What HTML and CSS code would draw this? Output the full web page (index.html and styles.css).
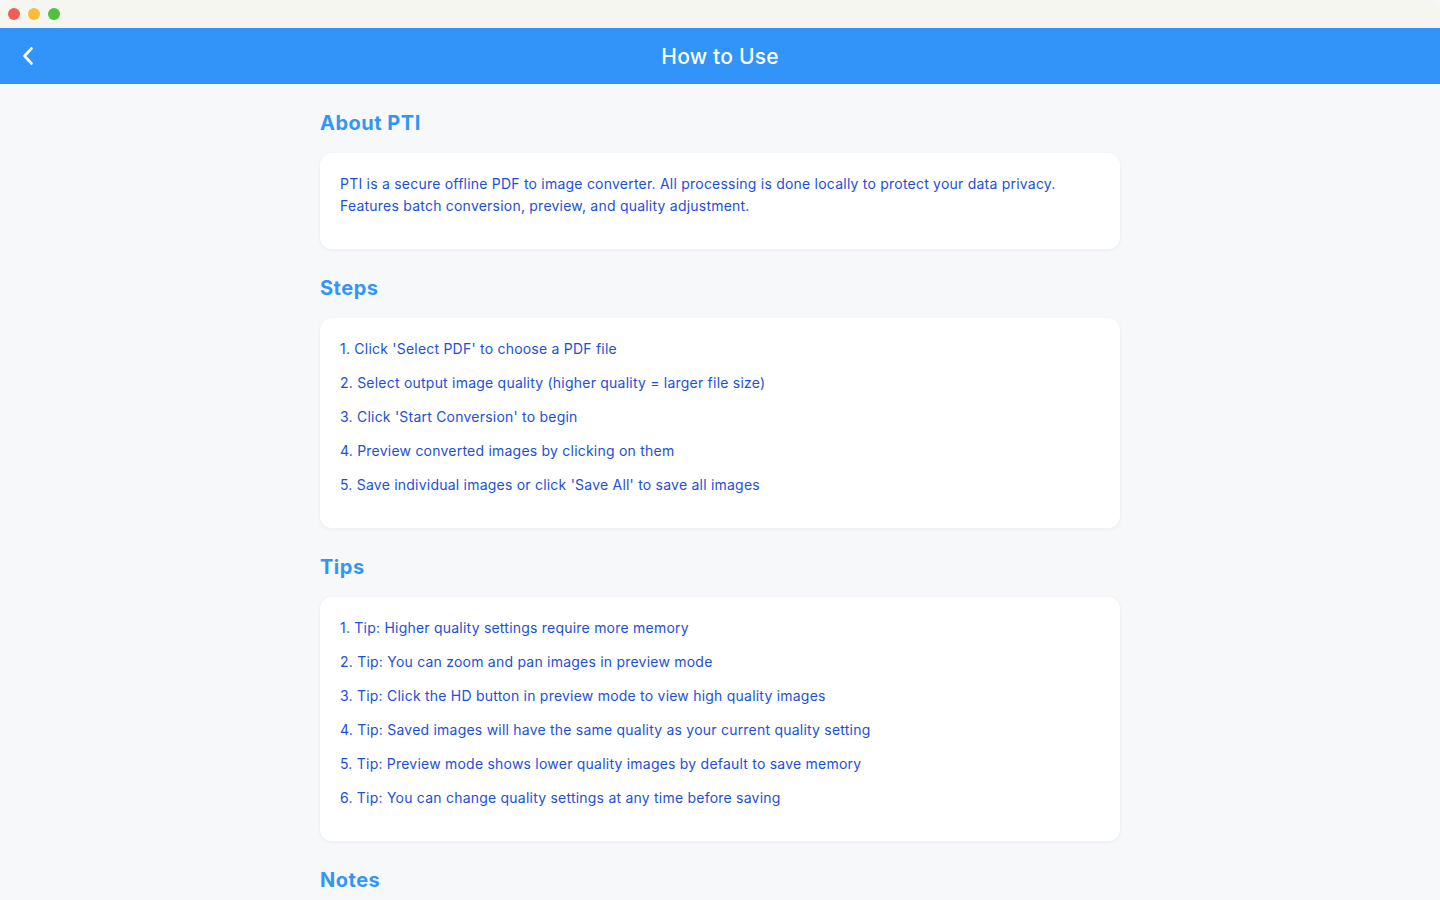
FILE: index.html
```html
<!DOCTYPE html>
<html>
<head>
<meta charset="utf-8">
<link rel="stylesheet" href="styles.css">
</head>
<body>
<div class="window">
  <div class="titlebar">
    <span class="light red"></span>
    <span class="light yellow"></span>
    <span class="light green"></span>
  </div>
  <header class="appbar">
    <button class="back" aria-label="Back">
      <svg width="14" height="20" viewBox="0 0 14 20"><path d="M10.5 2.5 L3.5 10 L10.5 17.5" fill="none" stroke="#fff" stroke-width="2.6" stroke-linecap="round" stroke-linejoin="round"/></svg>
    </button>
    <h1 class="title">How to Use</h1>
  </header>
  <main class="content">
    <div class="container">
      <h2 class="section-title">About PTI</h2>
      <div class="card">
        <p class="item">PTI is a secure offline PDF to image converter. All processing is done locally to protect your data privacy.<br>Features batch conversion, preview, and quality adjustment.</p>
      </div>

      <h2 class="section-title">Steps</h2>
      <div class="card">
        <p class="item">1. Click 'Select PDF' to choose a PDF file</p>
        <p class="item">2. Select output image quality (higher quality = larger file size)</p>
        <p class="item">3. Click 'Start Conversion' to begin</p>
        <p class="item">4. Preview converted images by clicking on them</p>
        <p class="item">5. Save individual images or click 'Save All' to save all images</p>
      </div>

      <h2 class="section-title">Tips</h2>
      <div class="card">
        <p class="item">1. Tip: Higher quality settings require more memory</p>
        <p class="item">2. Tip: You can zoom and pan images in preview mode</p>
        <p class="item">3. Tip: Click the HD button in preview mode to view high quality images</p>
        <p class="item">4. Tip: Saved images will have the same quality as your current quality setting</p>
        <p class="item">5. Tip: Preview mode shows lower quality images by default to save memory</p>
        <p class="item">6. Tip: You can change quality settings at any time before saving</p>
      </div>

      <h2 class="section-title">Notes</h2>
    </div>
  </main>
</div>
</body>
</html>
```
FILE: styles.css
```css
* { box-sizing: border-box; }
html, body {
  margin: 0;
  padding: 0;
  height: 100%;
  overflow: hidden;
  background: #f7f8fa;
  font-family: Inter, "Noto Sans", sans-serif;
}
.window {
  height: 900px;
  display: flex;
  flex-direction: column;
}
.titlebar {
  height: 28px;
  flex: 0 0 28px;
  background: #f6f6f1;
  display: flex;
  align-items: center;
  gap: 8px;
  padding-left: 8px;
  border-radius: 10px 10px 0 0;
}
.light {
  width: 12px;
  height: 12px;
  border-radius: 50%;
  display: block;
}
.red { background: #ed5f57; }
.yellow { background: #f6bd3b; }
.green { background: #4ec13f; }
.appbar {
  height: 56px;
  flex: 0 0 56px;
  background: #3293f9;
  display: flex;
  align-items: center;
  justify-content: center;
  position: relative;
}
.back {
  position: absolute;
  left: 21px;
  top: 18px;
  width: 14px;
  height: 20px;
  padding: 0;
  border: none;
  background: transparent;
  display: flex;
}
.title {
  margin: 0;
  color: #fff;
  font-size: 21px;
  font-weight: 500;
  letter-spacing: 0.2px;
}
.content {
  flex: 1;
  overflow: hidden;
}
.container {
  width: 800px;
  margin: 0 auto;
  padding-top: 25px;
}
.section-title {
  margin: 0 0 16px;
  height: 28px;
  line-height: 28px;
  font-size: 20px;
  font-weight: 700;
  letter-spacing: 0.5px;
  color: #3395f5;
}
.card {
  background: #fff;
  border-radius: 12px;
  padding: 20px 20px 20px;
  margin-bottom: 25px;
  box-shadow: 0 1px 4px rgba(20, 30, 60, 0.06);
}
.item {
  margin: 0 0 12px;
  font-size: 14px;
  line-height: 22px;
  color: #1d4fd8;
  letter-spacing: 0.22px;
}
```
